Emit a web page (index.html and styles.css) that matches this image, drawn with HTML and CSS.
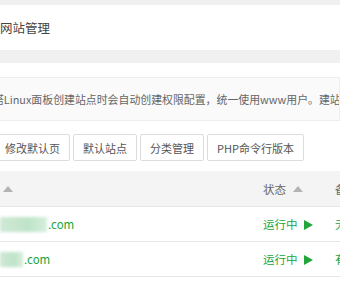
FILE: index.html
```html
<!DOCTYPE html>
<html lang="zh-CN">
<head>
    <meta charset="UTF-8">
    <title>网站管理</title>
    <link rel="stylesheet" href="styles.css">
</head>
<body>
    <div class="topbar">网站管理</div>

    <div class="panel">
        <div class="notice">宝塔Linux面板创建站点时会自动创建权限配置，统一使用www用户。建站时请注意站点目录权限。</div>

        <div class="btns">
            <button>修改默认页</button>
            <button>默认站点</button>
            <button>分类管理</button>
            <button>PHP命令行版本</button>
        </div>

        <div class="table">
            <div class="row head">
                <div class="cell name"><span class="sort"></span></div>
                <div class="cell status">状态 <span class="sort"></span></div>
                <div class="cell backup">备份</div>
            </div>
            <div class="row">
                <div class="cell name"><span class="mask" style="width: 47px"></span>.com</div>
                <div class="cell status run">运行中 <svg width="9" height="10" viewBox="0 0 9 10"><path d="M0 0 L9 5 L0 10 Z" fill="#20a53a"/></svg></div>
                <div class="cell backup">无备份</div>
            </div>
            <div class="row">
                <div class="cell name"><span class="mask" style="width: 23px"></span>.com</div>
                <div class="cell status run">运行中 <svg width="9" height="10" viewBox="0 0 9 10"><path d="M0 0 L9 5 L0 10 Z" fill="#20a53a"/></svg></div>
                <div class="cell backup">有备份</div>
            </div>
            <div class="row">
                <div class="cell name gray">test.com</div>
                <div class="cell status stop">已停止</div>
                <div class="cell backup">无备份</div>
            </div>
        </div>
    </div>
</body>
</html>
```

FILE: styles.css
```css
body {
    margin: 0;
    height: 286px;
    overflow: hidden;
    background-color: #f0f0f0;
    font-family: "Noto Sans CJK SC", "Microsoft YaHei", sans-serif;
    color: #333;
}

.topbar {
    margin-top: 5px;
    height: 45px;
    line-height: 45px;
    background: white;
    font-size: 12.5px;
    color: #444;
    margin-bottom: 13px;
}

.panel {
    background: white;
    padding-top: 14px;
    height: 300px;
}

.notice {
    margin-left: -33px;
    padding-left: 14px;
    height: 42px;
    line-height: 42px;
    border: 1px solid #eee;
    background-color: #fafafa;
    font-size: 10.9px;
    color: #666;
    white-space: nowrap;
    overflow: hidden;
}

.btns {
    display: flex;
    gap: 3px;
    margin: 13px 0 10px -5px;
}

.btns button {
    height: 27px;
    padding: 0 9px;
    border: 1px solid #ddd;
    border-radius: 2px;
    background: white;
    font-family: inherit;
    font-size: 11px;
    color: #555;
}

.row {
    display: grid;
    grid-template-columns: 263px 72px 1fr;
    height: 34px;
    align-items: center;
    border-top: 1px solid #e6e6e6;
    font-size: 11.5px;
    white-space: nowrap;
}

.row.head {
    height: 35px;
    border-top: none;
    background-color: #f4f4f4;
    color: #666;
}

.cell.name {
    display: flex;
    align-items: center;
    color: #20a53a;
}

.head .name {
    padding-left: 3px;
}

.sort {
    display: inline-block;
    width: 0;
    height: 0;
    border-left: 5px solid transparent;
    border-right: 5px solid transparent;
    border-bottom: 6px solid #b3b3b3;
    vertical-align: 2px;
    margin-left: 4px;
}

.head .name .sort {
    margin-left: 0;
}

.mask {
    display: inline-block;
    height: 15px;
    margin-right: 1px;
    background: linear-gradient(90deg, #cfe9d5, #bfe3c8 60%, #d6efdc);
    filter: blur(1.5px);
}

.run {
    color: #20a53a;
}

.run svg {
    margin-left: 4px;
    vertical-align: -1px;
}

.stop {
    color: #e0463f;
}

.gray {
    color: #999;
    padding-left: 8px;
}

.backup {
    color: #20a53a;
}

.head .backup {
    color: #666;
}
```
